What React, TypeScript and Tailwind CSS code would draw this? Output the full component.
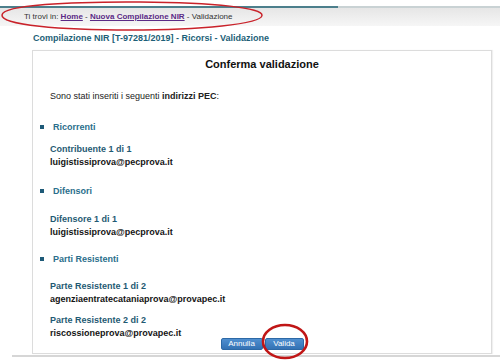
import React from "react";

function Item({ title, email, className }: { title: string; email: string; className: string }) {
  return (
    <div className={`pl-[17px] leading-[13px] text-[9px] font-bold ${className}`}>
      <div className="text-[#1f5a73]">{title}</div>
      <div className="text-[#141414]">{email}</div>
    </div>
  );
}

function Section({ label, className }: { label: string; className: string }) {
  return (
    <div className={`flex items-center pl-[7px] leading-[12px] text-[9px] font-bold text-[#2a6e8c] ${className}`}>
      <span className="w-[4px] h-[4px] bg-[#1e5a78] mr-[9px]" />
      <span>{label}</span>
    </div>
  );
}

export default function App() {
  return (
    <div
      className="relative w-[500px] h-[363px] bg-white overflow-hidden"
      style={{ fontFamily: '"Liberation Sans", Arial, sans-serif' }}
    >
      <div className="h-[6px] bg-white" />
      <div className="flex h-[2px]">
        <div className="w-[338px] bg-[#4c7f8c]" />
        <div className="flex-1 bg-[#c9d2d4]" />
      </div>
      <div className="h-[18px] flex items-center pl-[24px] text-[8px] text-[#333] bg-gradient-to-b from-[#e6e6e6] to-[#f6f6f6]">
        <span>Ti trovi in:&nbsp;</span>
        <span className="font-bold underline text-[#5b2a86]">Home</span>
        <span>&nbsp;-&nbsp;</span>
        <span className="font-bold underline text-[#5b2a86]">Nuova Compilazione NIR</span>
        <span>&nbsp;-&nbsp;Validazione</span>
      </div>
      <div className="mt-[6px] pl-[33px] leading-[12px] text-[9px] font-bold text-[#1d5f78]">
        Compilazione NIR [T-97281/2019] - Ricorsi - Validazione
      </div>
      <div className="mt-[6px] ml-[32px] w-[460px] h-[304px] border border-[#dcdcdc] shadow-[1px_0_1px_rgba(0,0,0,0.06)] flex flex-col">
        <div className="mt-[6px] text-center text-[11px] leading-[14px] font-bold text-[#111]">
          Conferma validazione
        </div>
        <div className="mt-[19px] pl-[17px] text-[9px] leading-[12px] text-[#222]">
          Sono stati inseriti i seguenti <span className="font-bold">indirizzi PEC</span>:
        </div>
        <Section label="Ricorrenti" className="mt-[19px]" />
        <Item title="Contribuente 1 di 1" email="luigistissiprova@pecprova.it" className="mt-[10px]" />
        <Section label="Difensori" className="mt-[16px]" />
        <Item title="Difensore 1 di 1" email="luigistissiprova@pecprova.it" className="mt-[16px]" />
        <Section label="Parti Resistenti" className="mt-[14px]" />
        <Item title="Parte Resistente 1 di 2" email="agenziaentratecataniaprova@provapec.it" className="mt-[15px]" />
        <Item title="Parte Resistente 2 di 2" email="riscossioneprova@provapec.it" className="mt-[8px]" />
        <div className="mt-[-2px] flex justify-center gap-[2px]">
          <button className="w-[42px] h-[12px] rounded-[2px] border border-[#2d69a6] bg-gradient-to-b from-[#4f8fd0] to-[#3472b4] text-white text-[8px] leading-[10px]">
            Annulla
          </button>
          <button className="w-[39px] h-[12px] rounded-[2px] border border-[#2d69a6] bg-gradient-to-b from-[#4f8fd0] to-[#3472b4] text-white text-[8px] leading-[10px]">
            Valida
          </button>
        </div>
      </div>
      <div className="ml-[12px] mt-[1px] h-[2px] bg-[#d6d6d6]" />

      <svg className="absolute left-0 top-0 pointer-events-none" width="500" height="363">
        <path
          d="M 2 15 C 3 5, 70 1.5, 140 2 C 216 2.5, 263 8, 262 15.5 C 261 24, 200 30, 130 30 C 60 30, 1 25, 2 15 Z"
          fill="none"
          stroke="#c9222a"
          strokeWidth="1.5"
        />
        <ellipse cx="285" cy="341.5" rx="22" ry="16.5" fill="none" stroke="#c01616" strokeWidth="2.6" />
      </svg>
    </div>
  );
}
